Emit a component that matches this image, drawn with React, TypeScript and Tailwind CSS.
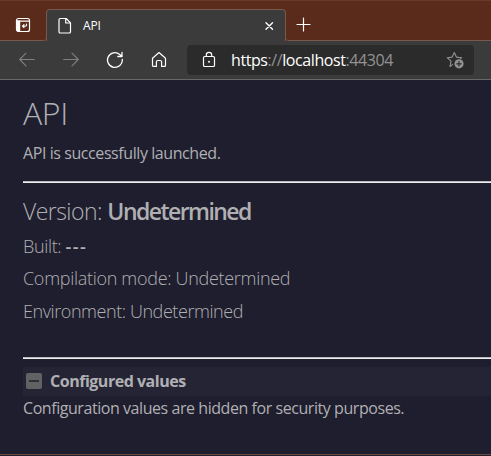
import type { ReactNode } from "react";

function Icon({ size, className = "", children }: { size: number; className?: string; children: ReactNode }) {
  return (
    <svg
      width={size}
      height={size}
      viewBox={`0 0 ${size} ${size}`}
      fill="none"
      stroke="currentColor"
      strokeWidth="1.2"
      strokeLinecap="round"
      strokeLinejoin="round"
      className={`block shrink-0 ${className}`}
    >
      {children}
    </svg>
  );
}

function TabStrip() {
  return (
    <div className="flex h-[41px] border-t border-[#6d3a2a] bg-[#5a2b1a] text-white">
      <div className="flex w-[46px] items-center rounded-br-[3px] border-b border-[#77594e] pt-[9px] pl-[15px]">
        <Icon size={16}>
          <rect x="1.5" y="1.5" width="13" height="13" rx="2" />
          <path d="M1.5 4.2h13" />
          <path d="M2 4h2.6v10.5H3L2 13z" fill="currentColor" />
          <path d="M11.5 7v.9q0 1.2-1.2 1.2H7.6M9 7.6L7.4 9.1 9 10.6" strokeWidth="1.1" />
        </Icon>
      </div>
      <div className="mt-2 flex w-[240px] items-center rounded-t-[4px] border-x border-t border-[#77594e] bg-[#3b3b3b] pl-[9px] pr-[10px]">
        <Icon size={18}>
          <path d="M4.2 1.5h6l4.3 4.3v8.9q0 1.3-1.3 1.3h-9q-1.2 0-1.2-1.3V2.8q0-1.3 1.2-1.3zM9.7 1.5V6h4.6" />
        </Icon>
        <span className="ml-[9px] text-[12px] leading-4 tracking-[-0.2px]">API</span>
        <Icon size={12} className="ml-auto">
          <path d="M3 2.8l6.5 6.5M9.5 2.8L3 9.3" strokeWidth="1.4" />
        </Icon>
      </div>
      <div className="flex flex-1 items-center rounded-bl-[3px] border-b border-[#77594e] pt-[8px] pl-[10px]">
        <Icon size={16}>
          <path d="M7.5 1v13M1 7.5h13" />
        </Icon>
      </div>
    </div>
  );
}

function Toolbar() {
  return (
    <div className="flex h-[39px] items-center border-b border-[#686868] bg-[#3b3b3b] pl-[18px] text-white">
      <Icon size={18} className="text-[#808080]">
        <path d="M16.3 8.5H1.7M8 2.2L1.7 8.5 8 14.8" strokeWidth="1.1" />
      </Icon>
      <Icon size={18} className="ml-[26px] text-[#808080]">
        <path d="M1.7 8.5h14.6M10 2.2l6.3 6.3-6.3 6.3" strokeWidth="1.1" />
      </Icon>
      <Icon size={18} className="ml-[26px]">
        <path d="M16.3 8.5A7.4 7.4 0 1 1 13.7 3.4L16 5.5M16 1.5v4h-4.2" strokeWidth="1.3" />
      </Icon>
      <Icon size={18} className="ml-[26px]">
        <path d="M2.5 7.2L9 1.5l6.5 5.7v7.2q0 1-1 1h-2.9V11q0-1.5-1.5-1.5H7.9Q6.4 9.5 6.4 11v4.4H3.5q-1 0-1-1z" strokeWidth="1.2" />
      </Icon>
      <div className="ml-[19px] flex h-[30px] w-[287px] items-center rounded-[4px] bg-[#2b2b2b] pl-[13px] pr-[10px]">
        <Icon size={18}>
          <rect x="3.5" y="5.5" width="11" height="10" rx="1.3" strokeWidth="1.2" />
          <path d="M6.3 5.5V4a2.7 2.7 0 0 1 5.4 0v1.5" strokeWidth="1.2" />
          <circle cx="9" cy="10.8" r="0.4" fill="currentColor" />
        </Icon>
        <span className="ml-[13px] whitespace-nowrap text-[16px] leading-5 tracking-[-0.42px] text-[#929292]">
          <span className="text-white">https</span>://<span className="text-white">localhost</span>:44304
        </span>
        <Icon size={18} className="ml-auto text-[#929292]">
          <path d="M6.6 13.6L4 15.5l1-5.3L1.2 6.7l5-.6L8.3 1.6l2.1 4.5 5.3.6-1 1" strokeWidth="1.1" />
          <circle cx="13" cy="12.8" r="4.6" fill="currentColor" stroke="none" />
          <path d="M13 10.6v4.4M10.8 12.8h4.4" stroke="#2b2b2b" />
        </Icon>
      </div>
    </div>
  );
}

function Rule({ className }: { className: string }) {
  return <hr className={`h-[2px] border-0 border-t border-[#b9b9be] bg-[#f0f0f2] ${className}`} />;
}

export default function App() {
  return (
    <div className="flex h-[456px] w-[491px] flex-col overflow-hidden bg-[#1f1e2e] font-['Open_Sans','Noto_Sans',sans-serif]">
      <TabStrip />
      <Toolbar />
      <main className="flex-1 pl-[23px] text-[#b0b0b3]">
        <h1 className="mt-[12px] h-[42px] text-[32px] leading-[42px] font-light tracking-[-0.4px]">API</h1>
        <p className="mt-[7px] h-[24px] text-[16px] leading-[24px] tracking-[-0.42px]">API is successfully launched.</p>
        <Rule className="mt-[16px]" />
        <h2 className="mt-[12px] h-[32px] text-[23px] leading-[32px] font-light tracking-[-0.55px]">
          Version: <span className="font-semibold tracking-[-1.55px]">Undetermined</span>
        </h2>
        <h3 className="mt-[6px] h-[26px] text-[18px] leading-[26px] font-light tracking-[-0.35px]">
          Built: <span className="font-semibold tracking-[1.4px]">---</span>
        </h3>
        <h3 className="mt-[6px] h-[26px] text-[18px] leading-[26px] font-light tracking-[-0.3px]">Compilation mode: Undetermined</h3>
        <h3 className="mt-[7px] h-[26px] text-[18px] leading-[26px] font-light tracking-[-0.43px]">Environment: Undetermined</h3>
        <Rule className="mt-[33px]" />
        <div className="mt-[8px] flex h-[29px] items-center bg-[#252435] pl-[3px]">
          <div className="-mt-px flex size-[16px] items-center justify-center rounded-[2px] bg-[#626264]">
            <div className="h-[2px] w-[10px] bg-[#303039]" />
          </div>
          <span className="-mt-px ml-[8px] text-[16px] leading-6 font-bold tracking-[-0.48px]">Configured values</span>
        </div>
        <p className="h-[24px] text-[16px] leading-[24px] tracking-[-0.44px]">Configuration values are hidden for security purposes.</p>
      </main>
      <div className="h-[2px] border-t border-[#6b4a40] bg-[#1f1e2e]" />
    </div>
  );
}
